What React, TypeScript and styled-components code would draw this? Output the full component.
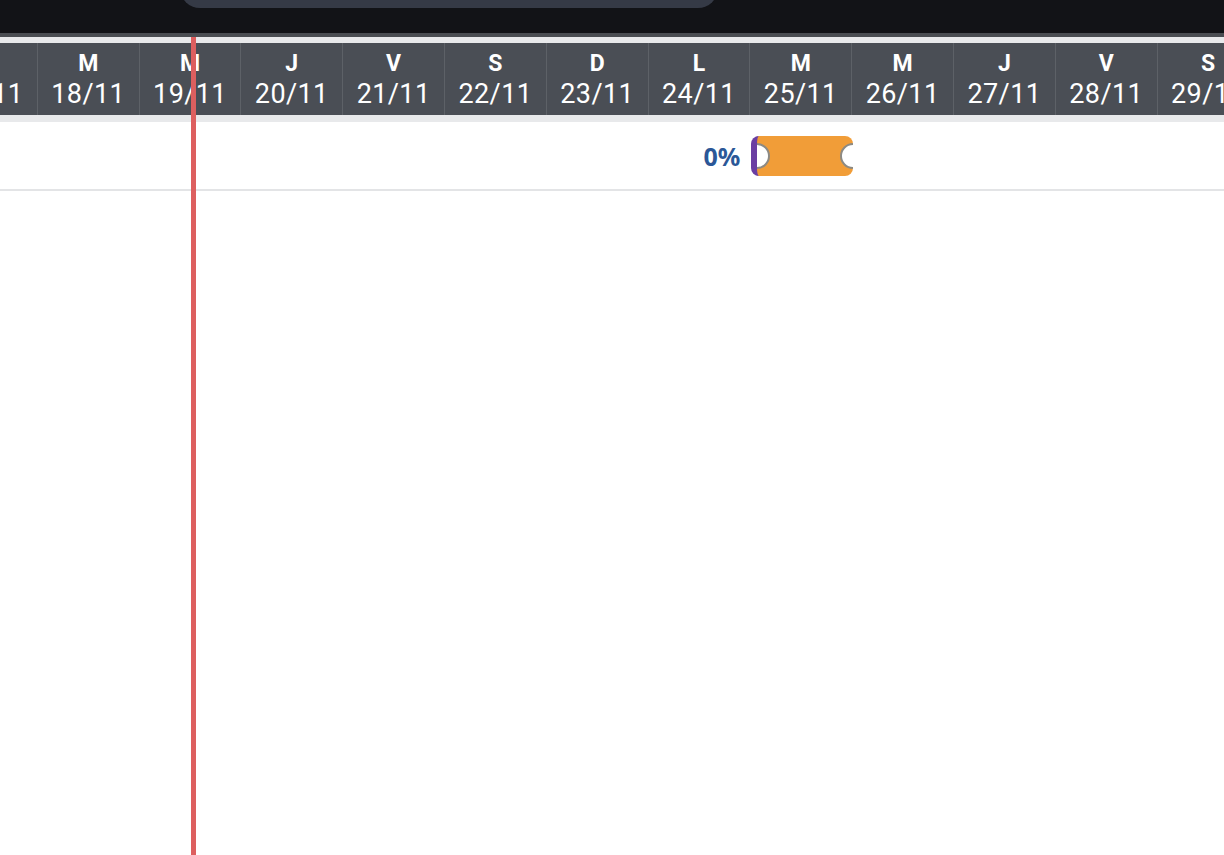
import React from 'react';
import styled, { createGlobalStyle } from 'styled-components';

const GlobalStyle = createGlobalStyle`
  html, body {
    margin: 0;
    padding: 0;
    background: #ffffff;
    overflow: hidden;
  }
  body {
    font-family: Roboto, "Noto Sans", sans-serif;
  }
`;

const COL_W = 101.8;
const OFFSET = -64;

const Page = styled.div`
  position: relative;
  width: 1224px;
  height: 855px;
  overflow: hidden;
  display: flex;
  flex-direction: column;
`;

const TopBar = styled.div`
  height: 33px;
  background: #121317;
  display: flex;
  padding-left: 180px;
`;

const TopPill = styled.div`
  width: 538px;
  height: 40px;
  margin-top: -32px;
  background: #353a46;
  border-radius: 26px;
`;

const Divider = styled.div`
  height: 4px;
  background: #4a4d52;
`;

const Gap = styled.div<{ $h: number }>`
  height: ${p => p.$h}px;
  background: #e8e9eb;
`;

const HeaderBand = styled.div`
  height: 72px;
  background: #4a4e55;
  display: flex;
  margin-left: ${OFFSET}px;
`;

const DayCell = styled.div`
  flex: 0 0 ${COL_W}px;
  box-sizing: border-box;
  border-right: 1px solid #5d6167;
  display: flex;
  flex-direction: column;
  align-items: center;
  justify-content: center;
  color: #ffffff;
  padding-top: 2px;
`;

const DayLetter = styled.div`
  font-weight: 700;
  font-size: 23px;
  line-height: 28px;
`;

const DayDate = styled.div`
  font-size: 27px;
  line-height: 32px;
  letter-spacing: 0.4px;
`;

const TaskRow = styled.div`
  position: relative;
  height: 67px;
  border-bottom: 2px solid #e3e4e6;
`;

const Bar = styled.div<{ $left: number; $width: number }>`
  position: absolute;
  top: 14px;
  left: ${p => p.$left}px;
  width: ${p => p.$width}px;
  height: 40px;
  box-sizing: border-box;
  background: #f19d38;
  border-left: 6px solid #6a3ea2;
  border-radius: 8px;
  overflow: visible;
`;

const Progress = styled.span`
  position: absolute;
  right: calc(100% + 17px);
  top: 50%;
  transform: translateY(-50%);
  font-family: "Noto Sans", "Open Sans", sans-serif;
  font-weight: 700;
  font-size: 25px;
  line-height: 1;
  color: #2b5797;
  white-space: nowrap;
`;

const Handle = styled.div<{ $side: 'left' | 'right' }>`
  position: absolute;
  top: 50%;
  width: 26px;
  height: 26px;
  margin-top: -13px;
  box-sizing: border-box;
  border-radius: 50%;
  background: #ffffff;
  border: 2px solid #8c8a84;
  ${p => (p.$side === 'left' ? 'left: -13px;' : 'right: -13px;')}
`;

const HandleClip = styled.div<{ $side: 'left' | 'right' }>`
  position: absolute;
  top: 0;
  bottom: 0;
  width: 20px;
  overflow: hidden;
  ${p => (p.$side === 'left' ? 'left: 0;' : 'right: 0; border-radius: 0 8px 8px 0;')}
`;

const TodayLine = styled.div<{ $left: number }>`
  position: absolute;
  top: 37px;
  bottom: 0;
  left: ${p => p.$left}px;
  width: 5px;
  background: #dd5f5f;
  z-index: 5;
`;

const days = [
  ['L', '17/11'],
  ['M', '18/11'],
  ['M', '19/11'],
  ['J', '20/11'],
  ['V', '21/11'],
  ['S', '22/11'],
  ['D', '23/11'],
  ['L', '24/11'],
  ['M', '25/11'],
  ['M', '26/11'],
  ['J', '27/11'],
  ['V', '28/11'],
  ['S', '29/11'],
];

export default function App() {
  const barIndex = 8;
  return (
    <Page>
      <GlobalStyle />
      <TopBar>
        <TopPill />
      </TopBar>
      <Divider />
      <Gap $h={6} />
      <HeaderBand>
        {days.map(([l, d], i) => (
          <DayCell key={i}>
            <DayLetter>{l}</DayLetter>
            <DayDate>{d}</DayDate>
          </DayCell>
        ))}
      </HeaderBand>
      <Gap $h={7} />
      <TaskRow>
        <Bar $left={OFFSET + barIndex * COL_W + 1} $width={COL_W}>
          <Progress>0%</Progress>
          <HandleClip $side="left">
            <Handle $side="left" />
          </HandleClip>
          <HandleClip $side="right">
            <Handle $side="right" />
          </HandleClip>
        </Bar>
      </TaskRow>
      <TodayLine $left={191} />
    </Page>
  );
}
